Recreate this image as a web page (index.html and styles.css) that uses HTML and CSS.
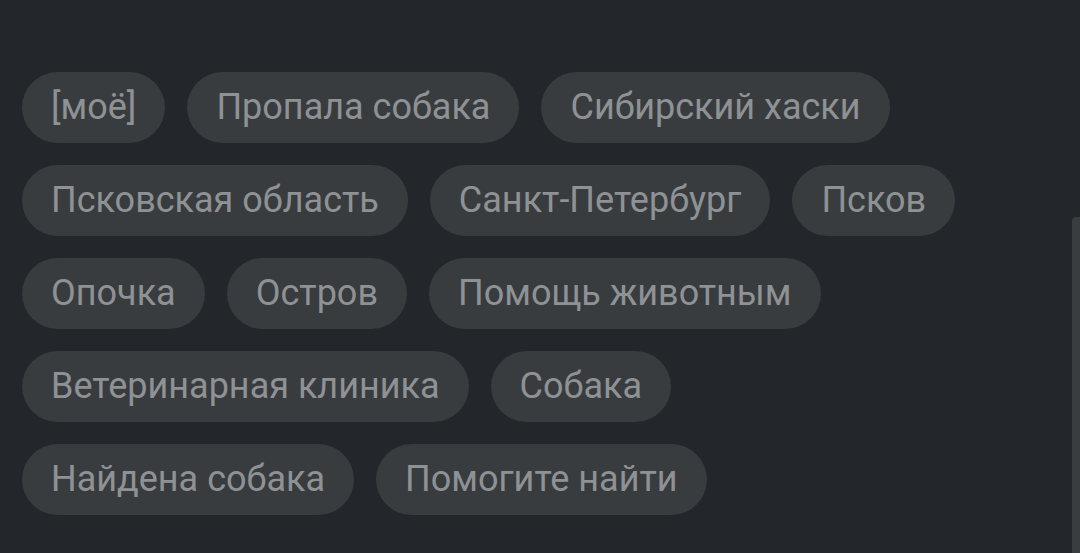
FILE: index.html
```html
<!DOCTYPE html>
<html lang="ru">
<head>
<meta charset="utf-8">
<link rel="stylesheet" href="styles.css">
</head>
<body>
<div class="tags">
  <span class="chip">[моё]</span>
  <span class="chip">Пропала собака</span>
  <span class="chip">Сибирский хаски</span>
  <span class="chip">Псковская область</span>
  <span class="chip">Санкт-Петербург</span>
  <span class="chip">Псков</span>
  <span class="chip">Опочка</span>
  <span class="chip">Остров</span>
  <span class="chip">Помощь животным</span>
  <span class="chip">Ветеринарная клиника</span>
  <span class="chip">Собака</span>
  <span class="chip">Найдена собака</span>
  <span class="chip">Помогите найти</span>
</div>
<div class="scroll-thumb"></div>
</body>
</html>
```
FILE: styles.css
```css
html, body {
  margin: 0;
  height: 100%;
  overflow: hidden;
}
body {
  background: #23272b;
  font-family: Roboto, "Liberation Sans", sans-serif;
}
.tags {
  display: flex;
  flex-wrap: wrap;
  gap: 22px;
  padding: 72px 100px 0 22px;
}
.chip {
  display: flex;
  align-items: center;
  height: 71px;
  padding: 0 29px 2px;
  border-radius: 36px;
  background: #393c3f;
  color: #8f9295;
  font-size: 36px;
  white-space: nowrap;
  box-sizing: border-box;
}
.scroll-thumb {
  position: absolute;
  right: 0;
  top: 217px;
  width: 8px;
  height: 336px;
  background: #3a3d40;
  border-radius: 4px 0 0 0;
}
```
